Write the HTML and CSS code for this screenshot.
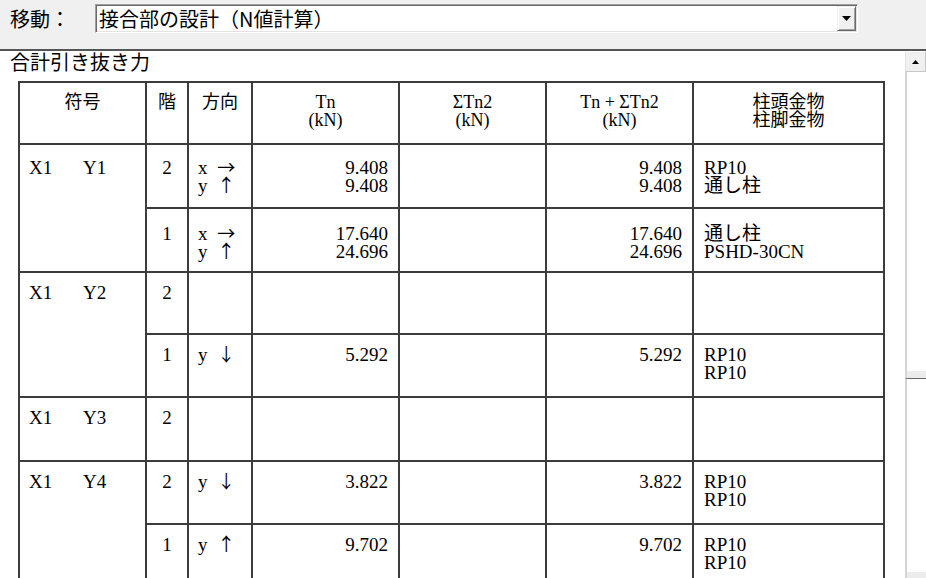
FILE: index.html
```html
<!DOCTYPE html>
<html lang="ja">
<head>
<meta charset="utf-8">
<title>接合部の設計</title>
<link rel="stylesheet" href="styles.css">
</head>
<body>
<div class="toolbar">
  <span class="lbl">移動：</span>
  <div class="combo">
    <span class="combo-text">接合部の設計（N値計算）</span>
    <span class="combo-btn"><svg width="9" height="5" viewBox="0 0 9 5"><polygon points="0,0 9,0 4.5,5" fill="#000"/></svg></span>
  </div>
</div>
<div class="main">
  <div class="content">
    <div class="title">合計引き抜き力</div>
    <table class="grid">
      <colgroup>
        <col class="c1"><col class="c2"><col class="c3"><col class="c4"><col class="c5"><col class="c6"><col class="c7">
      </colgroup>
      <thead>
        <tr class="hd">
          <th>符号</th><th>階</th><th>方向</th><th>Tn<br>(kN)</th><th>ΣTn2<br>(kN)</th><th>Tn + ΣTn2<br>(kN)</th><th>柱頭金物<br>柱脚金物</th>
        </tr>
      </thead>
      <tbody>
        <tr class="r1 h64">
          <td rowspan="2" class="sym"><span class="sx">X1</span><span>Y1</span></td>
          <td class="fl">2</td>
          <td class="dir">x <span class="ar">→</span><br>y <span class="ar">↑</span></td>
          <td class="num">9.408<br>9.408</td>
          <td></td>
          <td class="num">9.408<br>9.408</td>
          <td class="txt">RP10<br>通し柱</td>
        </tr>
        <tr class="r2 h64">
          <td class="fl">1</td>
          <td class="dir">x <span class="ar">→</span><br>y <span class="ar">↑</span></td>
          <td class="num">17.640<br>24.696</td>
          <td></td>
          <td class="num">17.640<br>24.696</td>
          <td class="txt">通し柱<br>PSHD-30CN</td>
        </tr>
        <tr class="h62">
          <td rowspan="2" class="sym"><span class="sx">X1</span><span>Y2</span></td>
          <td class="fl">2</td>
          <td class="dir"></td><td></td><td></td><td></td><td class="txt"></td>
        </tr>
        <tr class="h63">
          <td class="fl">1</td>
          <td class="dir">y <span class="ar">↓</span></td>
          <td class="num">5.292</td>
          <td></td>
          <td class="num">5.292</td>
          <td class="txt">RP10<br>RP10</td>
        </tr>
        <tr class="h64">
          <td class="sym"><span class="sx">X1</span><span>Y3</span></td>
          <td class="fl">2</td>
          <td class="dir"></td><td></td><td></td><td></td><td class="txt"></td>
        </tr>
        <tr class="h63">
          <td rowspan="2" class="sym"><span class="sx">X1</span><span>Y4</span></td>
          <td class="fl">2</td>
          <td class="dir">y <span class="ar">↓</span></td>
          <td class="num">3.822</td>
          <td></td>
          <td class="num">3.822</td>
          <td class="txt">RP10<br>RP10</td>
        </tr>
        <tr class="h63">
          <td class="fl">1</td>
          <td class="dir">y <span class="ar">↑</span></td>
          <td class="num">9.702</td>
          <td></td>
          <td class="num">9.702</td>
          <td class="txt">RP10<br>RP10</td>
        </tr>
      </tbody>
    </table>
  </div>
  <div class="vscroll">
    <div class="sb-up"><svg width="7" height="4" viewBox="0 0 7 4"><polygon points="0,4 7,4 3.5,0" fill="#000"/></svg></div>
    <div class="sb-thumb"></div>
    <div class="sb-track"></div>
    <div class="sb-down"></div>
  </div>
</div>
</body>
</html>
```
FILE: styles.css
```css
* { box-sizing: border-box; }
html, body { margin: 0; padding: 0; }
body {
  width: 926px;
  height: 578px;
  overflow: hidden;
  background: #f0f0f0;
  color: #000;
  font-family: "Noto Sans CJK JP", "Noto Sans", sans-serif;
}

/* ---------- top bar ---------- */
.toolbar {
  height: 49px;
  display: flex;
  align-items: flex-start;
  padding-top: 4px;
}
.lbl {
  width: 95px;
  padding-left: 10px;
  font-size: 20px;
  line-height: 29px;
}
.combo {
  width: 763px;
  height: 29px;
  display: flex;
  padding: 1px;
  background: #fff;
  border: 1px solid;
  border-color: #a0a0a0 #fff #fff #a0a0a0;
  box-shadow: inset 1px 1px 0 #696969, inset -1px -1px 0 #e3e3e3;
}
.combo-text {
  flex: 1;
  padding-left: 2px;
  font-size: 20px;
  line-height: 25px;
  white-space: nowrap;
}
.combo-btn {
  width: 19px;
  height: 25px;
  display: flex;
  align-items: center;
  justify-content: center;
  background: #f0f0f0;
  border: 1px solid;
  border-color: #f0f0f0 #696969 #696969 #f0f0f0;
  box-shadow: inset 1px 1px 0 #fff, inset -1px -1px 0 #a0a0a0;
}

/* ---------- main area ---------- */
.main {
  display: flex;
  height: 529px;
  border-top: 2px solid #555;
}
.content {
  flex: 1;
  background: #fff;
}
.title {
  margin-top: -2px;
  padding-left: 10px;
  font-size: 20px;
  line-height: 26px;
  white-space: nowrap;
}

/* ---------- table ---------- */
.grid {
  margin: 6px 0 0 18px;
  width: 865px;
  table-layout: fixed;
  border-collapse: collapse;
  font-family: "Liberation Serif", "Noto Sans CJK JP", serif;
  font-size: 19px;
}
.c1 { width: 127px; }
.c2 { width: 42px; }
.c3 { width: 64px; }
.c4 { width: 147px; }
.c5 { width: 147px; }
.c6 { width: 147px; }
.c7 { width: 191px; }

.grid th, .grid td {
  border: 2px solid #3c3c3c;
  vertical-align: top;
  white-space: nowrap;
  overflow: hidden;
}
.grid th {
  font-weight: normal;
  font-size: 18px;
  text-align: center;
  line-height: 18px;
  padding: 10px 0 0;
}
.hd { height: 62px; }
.h62 { height: 62px; }
.h63 { height: 63px; }
.h64 { height: 64px; }

.grid td {
  line-height: 18.3px;
  padding: 11px 0 0;
}
.r1 td { padding-top: 14px; }
.r2 td { padding-top: 16px; }

.sym { padding-left: 9px !important; }
.sx { display: inline-block; width: 54px; }
.fl { text-align: center; }
.dir { padding-left: 9px !important; }
.ar {
  font-family: "Noto Sans CJK JP", sans-serif;
  font-size: 18px;
  line-height: 12px;
  margin-left: 5px;
}
.num { text-align: right; padding-right: 10px !important; }
.txt { padding-left: 10px !important; }

/* ---------- scrollbar ---------- */
.vscroll {
  width: 21px;
  display: flex;
  flex-direction: column;
  background: #fff;
}
.sb-up {
  height: 21px;
  display: flex;
  align-items: center;
  justify-content: center;
  background: #f0f0f0;
  border: 1px solid;
  border-color: #fff #c8c8c8 #c8c8c8 #e3e3e3;
}
.sb-thumb {
  height: 307px;
  background: #fff;
  border-left: 2px solid #d4d4d4;
  border-bottom: 1px solid #666;
  box-shadow: inset 0 -7px 0 #ececec;
}
.sb-track {
  flex: 1;
  background: #fff;
  border-left: 2px solid #d4d4d4;
}
.sb-down {
  height: 6px;
  background: #ececec;
  border-left: 2px solid #d4d4d4;
}
```
